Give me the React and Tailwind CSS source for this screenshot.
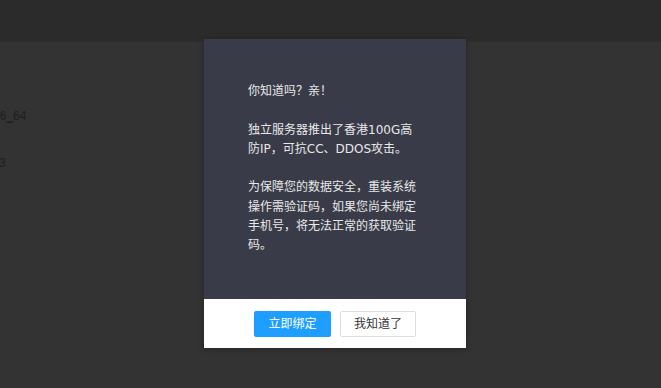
import React from 'react';

// Background page (dimmed by the layer shade) plus the notice dialog on top
export default function App() {
  return (
    <div
      className="relative w-[661px] h-[388px] overflow-hidden bg-[#333333]"
      style={{ fontFamily: '"Liberation Sans", "Noto Sans CJK SC", sans-serif' }}
    >
      {/* dimmed page behind the shade */}
      <div className="h-[42px] bg-[#2b2b2b] border-b border-[#2e2e2e]"></div>
      <div className="flex flex-col text-[12px] text-[#1e1e1e] pt-[66px]">
        <div className="-ml-[13px] leading-[16px]">
          x86<span className="underline decoration-[#262626]">_</span>64
        </div>
        <div className="-ml-[7px] mt-[31px] leading-[16px]">x3</div>
      </div>

      {/* dialog */}
      <div className="absolute left-[204px] top-[39px] w-[262px] shadow-[0_1px_6px_rgba(0,0,0,0.3)]">
        <div
          className="bg-[#393c48] px-[44px] pt-[43px] pb-[44px] text-[12px] leading-[19.25px] text-[#e8e8e8]"
          style={{ fontFamily: '"DejaVu Sans", "Noto Sans CJK SC", sans-serif' }}
        >
          你知道吗？亲！
          <br />
          <br />
          独立服务器推出了香港100G高防IP，可抗CC、DDOS攻击。
          <br />
          <br />
          为保障您的数据安全，重装系统操作需验证码，如果您尚未绑定手机号，将无法正常的获取验证码。
        </div>
        <div className="bg-white h-[49px] flex items-center justify-center gap-[9px]">
          <button className="w-[77px] h-[26px] bg-[#1e9fff] text-white text-[12px] rounded-[2px]">
            立即绑定
          </button>
          <button className="w-[76px] h-[26px] bg-white text-[#333333] text-[12px] border border-[#dedede] rounded-[2px]">
            我知道了
          </button>
        </div>
      </div>
    </div>
  );
}
